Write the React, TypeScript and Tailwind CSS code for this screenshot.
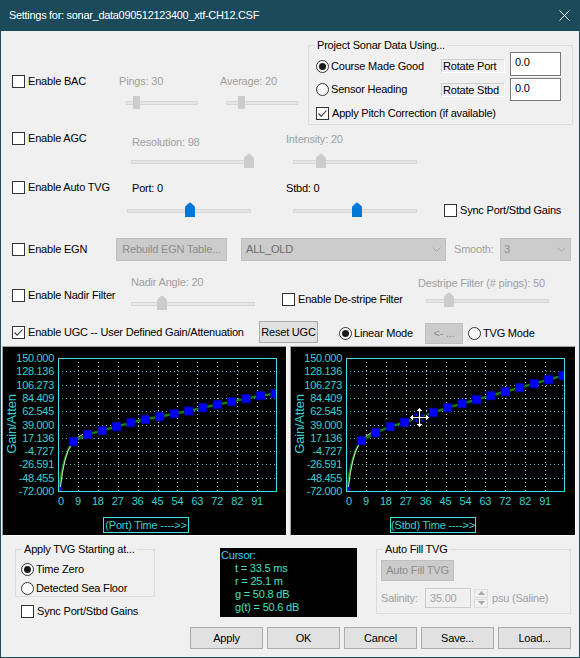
import React from "react";

const CYAN_TEXT = "#38d0d0";
const CYAN_LINE = "#40e0e0";

const Y_LABELS = ["150.000", "128.136", "106.273", "84.409", "62.545", "39.000", "17.136", "-4.727", "-26.591", "-48.455", "-72.000"];
const X_LABELS = ["0", "9", "18", "27", "36", "45", "54", "63", "72", "82", "91"];
const PORT = [94.7, 87.3, 83.7, 79.7, 75.7, 72.3, 69.7, 66.7, 64, 60.7, 57.7, 54.7, 51.7, 48.7, 46.7];
const STBD = [93.7, 85.7, 79.7, 75.3, 70.7, 65.7, 60.7, 56.7, 52.7, 48.7, 44.7, 40.7, 36.7, 32.7, 28.7];

function Check({ label, checked = false }: { label: string; checked?: boolean }) {
  return (
    <div className="flex items-center gap-[3px] whitespace-nowrap">
      <span className="w-[13px] h-[13px] shrink-0 border border-[#333333] bg-white flex items-center justify-center">
        {checked && (
          <svg width="11" height="11" viewBox="0 0 11 11">
            <path d="M1.5 5.5 4.2 8.2 9.5 2.5" fill="none" stroke="#333333" strokeWidth="1.1" />
          </svg>
        )}
      </span>
      <span>{label}</span>
    </div>
  );
}

function Radio({ label, checked = false }: { label: string; checked?: boolean }) {
  return (
    <div className="flex items-center gap-[2px] whitespace-nowrap">
      <span className="w-[13px] h-[13px] shrink-0 rounded-full border border-[#333333] bg-white flex items-center justify-center">
        {checked && <span className="w-[7px] h-[7px] rounded-full bg-[#1a1a1a]" />}
      </span>
      <span>{label}</span>
    </div>
  );
}

function Slider({ className, at, active = false, flat = false }: { className: string; at: number; active?: boolean; flat?: boolean }) {
  return (
    <div className={`relative shrink-0 ${flat ? "h-[13px]" : "h-[15px]"} ${className}`}>
      <div className={`absolute left-0 right-0 h-[4px] bg-[#e7e7e7] border border-[#d6d6d6] ${flat ? "top-[5px]" : "top-[7px]"}`} />
      {flat ? (
        <div className="absolute top-0 w-[7px] h-[13px] bg-[#cccccc]" style={{ left: at }} />
      ) : (
        <svg className="absolute top-0" style={{ left: at }} width="10" height="15" viewBox="0 0 10 15">
          <path d="M0 15V5.5Q0 4.5 1 3.8L4 1Q5 0 6 1L9 3.8Q10 4.5 10 5.5V15Z" fill={active ? "#0078d7" : "#cccccc"} />
        </svg>
      )}
    </div>
  );
}

function Chevron() {
  return (
    <svg width="9" height="5" viewBox="0 0 9 5">
      <path d="M0.5 0.5 4.5 4.5 8.5 0.5" fill="none" stroke="#a8a8a8" strokeWidth="1" />
    </svg>
  );
}

function Chart({ id, title, ys, width, cursor = false }: { id: string; title: string; ys: number[]; width: number; cursor?: boolean }) {
  const L = 55, R = 274, T = 11, B = 144;
  const dy = (B - T) / 10;
  const dx = (R - L) / 11;
  const pts = ys.map((y, i) => [70.3 + 14.4 * i, y] as const);
  const line = pts.map(([x, y]) => `${x},${y}`).join(" ");
  return (
    <svg width={width} height="188" className="block" fontFamily="'Liberation Sans', Arial, sans-serif">
      <defs>
        <clipPath id={id}>
          <rect x={L} y={T} width={R - L} height={B - T} />
        </clipPath>
      </defs>
      {Y_LABELS.map((t, k) => (
        <text key={t} x={51} y={T + k * dy + 4} textAnchor="end" fontSize="11" letterSpacing="-0.3" fill={CYAN_TEXT}>
          {t}
        </text>
      ))}
      {X_LABELS.map((t, k) => (
        <text key={t} x={k === 0 ? L + 3 : L + k * dx} y={158} textAnchor="middle" fontSize="11" fill={CYAN_TEXT}>
          {t}
        </text>
      ))}
      <text transform="translate(13,77) rotate(-90)" textAnchor="middle" fontSize="13" fill={CYAN_TEXT}>
        Gain/Atten
      </text>
      {Array.from({ length: 9 }, (_, k) => {
        const y = Math.round(T + (k + 1) * dy) + 0.5;
        return <line key={k} x1={L} x2={R} y1={y} y2={y} stroke="#30c8c8" strokeDasharray="1 3" />;
      })}
      {Array.from({ length: 10 }, (_, k) => {
        const x = Math.round(L + (k + 1) * dx) + 0.5;
        return <line key={k} x1={x} x2={x} y1={T} y2={B} stroke="#e0e0e0" strokeDasharray="1 3" />;
      })}
      <g clipPath={`url(#${id})`}>
        <path d={`M56 143 Q61 104 ${pts[0][0]} ${pts[0][1]}`} fill="none" stroke="#128012" strokeWidth="2.2" />
        <polyline points={line} fill="none" stroke="#128012" strokeWidth="2.4" />
        <path d={`M57.5 140 Q61 108 ${pts[0][0] - 2} ${pts[0][1] + 3}`} fill="none" stroke="#ffffff" strokeWidth="0.8" />
        <line x1={pts[0][0] + 4} y1={pts[0][1] - 4} x2={pts[1][0] - 3} y2={pts[1][1] - 1} stroke="#ffffff" strokeWidth="0.8" />
        <rect x={53} y={140} width={6} height={6} fill="#0000ff" />
        {pts.map(([x, y], i) => (
          <rect key={i} x={x - 4} y={y - 4} width={8} height={8} fill="#0000ff" stroke="#0000b0" strokeWidth="1" />
        ))}
      </g>
      <rect x={L + 0.5} y={T + 0.5} width={R - L - 1} height={B - T} fill="none" stroke={CYAN_LINE} />
      <rect x={id === "p" ? 100.5 : 99.5} y={170.5} width={85} height={15} fill="none" stroke={CYAN_LINE} />
      <text x={id === "p" ? 143 : 142} y={181.5} textAnchor="middle" fontSize="11" letterSpacing="-0.2" fill={CYAN_TEXT}>
        {title}
      </text>
      {cursor && (
        <g transform="translate(128.5,70.5)">
          <path
            d="M0 -10 4 -6 1 -6 1 -1 6 -1 6 -4 10 0 6 4 6 1 1 1 1 6 4 6 0 10 -4 6 -1 6 -1 1 -6 1 -6 4 -10 0 -6 -4 -6 -1 -1 -1 -1 -6 -4 -6Z"
            fill="#ffffff"
            stroke="#000000"
            strokeWidth="1"
          />
        </g>
      )}
    </svg>
  );
}

export default function App() {
  const gray = "text-[#a0a0a0]";
  return (
    <div className="w-[580px] h-[658px] bg-[#1b4b5a] flex flex-col font-['Liberation_Sans',Arial,sans-serif] text-[11px] leading-[13px] tracking-[-0.2px] text-black">
      {/* title bar */}
      <div className="h-[31px] shrink-0 flex items-center justify-between pl-[9px] pr-[10px] text-white tracking-[-0.3px]">
        <span>Settings for: sonar_data090512123400_xtf-CH12.CSF</span>
        <svg width="11" height="11" viewBox="0 0 11 11">
          <path d="M0.5 0.5 10.5 10.5 M10.5 0.5 0.5 10.5" stroke="#ffffff" strokeWidth="1" />
        </svg>
      </div>

      <div className="flex-1 mx-[1px] mb-[1px] bg-[#f0f0f0] flex flex-col">
        {/* BAC + projection group */}
        <div className="h-[96px] flex items-start">
          <div className="w-[307px] pt-[44px] flex items-start">
            <div className="w-[118px] pl-[11px]">
              <Check label="Enable BAC" />
            </div>
            <div className="w-[101px] flex flex-col">
              <span className={gray}>Pings: 30</span>
              <Slider className="mt-[8px] ml-[7px] w-[72px]" at={7} flat />
            </div>
            <div className="flex flex-col">
              <span className={gray}>Average: 20</span>
              <Slider className="mt-[8px] ml-[6px] w-[72px]" at={12} flat />
            </div>
          </div>
          <fieldset className="mt-[7px] w-[265px] h-[87px] border border-[#dcdcdc]">
            <legend className="ml-[6px] px-[2px] leading-[14px]">Project Sonar Data Using...</legend>
            <div className="h-[25px] flex items-start">
              <div className="w-[132px] pl-[7px] mt-[8px]">
                <Radio label="Course Made Good" checked />
              </div>
              <div className="mt-[7px] w-[64px] h-[14px] pl-[1px] leading-[13px] border border-t-[#cfcfcf] border-l-[#cfcfcf] border-r-white border-b-white">
                Rotate Port
              </div>
              <div className="ml-[5px] w-[51px] h-[24px] border border-[#7a7a7a] bg-white pl-[4px] pt-[3px]">0.0</div>
            </div>
            <div className="h-[24px] flex items-start">
              <div className="w-[132px] pl-[7px] mt-[6px]">
                <Radio label="Sensor Heading" />
              </div>
              <div className="mt-[6px] w-[64px] h-[14px] pl-[1px] leading-[13px] border border-t-[#cfcfcf] border-l-[#cfcfcf] border-r-white border-b-white">
                Rotate Stbd
              </div>
              <div className="ml-[5px] mt-[1px] w-[51px] h-[23px] border border-[#7a7a7a] bg-white pl-[4px] pt-[3px]">0.0</div>
            </div>
            <div className="pl-[7px] mt-[6px]">
              <Check label="Apply Pitch Correction (if available)" checked />
            </div>
          </fieldset>
        </div>

        {/* AGC */}
        <div className="h-[48px] flex items-start">
          <div className="w-[130px] pl-[11px] pt-[5px]">
            <Check label="Enable AGC" />
          </div>
          <div className="w-[155px] flex flex-col">
            <span className={`ml-[1px] mt-[9px] ${gray}`}>Resolution: 98</span>
            <Slider className="mt-[4px] w-[123px]" at={113} />
          </div>
          <div className="flex flex-col">
            <span className={`mt-[6px] ${gray}`}>Intensity: 20</span>
            <Slider className="mt-[7px] ml-[7px] w-[124px]" at={23} />
          </div>
        </div>

        {/* Auto TVG */}
        <div className="h-[55px] flex items-start">
          <div className="w-[126px] pl-[11px] pt-[6px]">
            <Check label="Enable Auto TVG" />
          </div>
          <div className="w-[159px] flex flex-col">
            <span className="ml-[5px] mt-[7px]">Port: 0</span>
            <Slider className="mt-[7px] w-[124px]" at={58} active />
          </div>
          <div className="w-[158px] flex flex-col">
            <span className="mt-[7px]">Stbd: 0</span>
            <Slider className="mt-[7px] ml-[7px] w-[124px]" at={59} active />
          </div>
          <div className="pt-[29px]">
            <Check label="Sync Port/Stbd Gains" />
          </div>
        </div>

        {/* EGN */}
        <div className="h-[38px] flex items-start">
          <div className="w-[115px] pl-[11px] pt-[13px]">
            <Check label="Enable EGN" />
          </div>
          <div className="mt-[8px] w-[111px] h-[23px] bg-[#cccccc] border border-[#bfbfbf] text-[#8c8c8c] flex items-center justify-center whitespace-nowrap">
            Rebuild EGN Table...
          </div>
          <div className="ml-[14px] mt-[8px] w-[205px] h-[23px] bg-[#cccccc] border border-[#bfbfbf] text-[#6d6d6d] flex items-center justify-between pl-[4px] pr-[4px]">
            <span>ALL_OLD</span>
            <Chevron />
          </div>
          <span className={`ml-[8px] mt-[8px] w-[46px] leading-[23px] ${gray}`}>Smooth:</span>
          <div className="mt-[8px] w-[71px] h-[23px] bg-[#cccccc] border border-[#bfbfbf] text-[#8c8c8c] flex items-center justify-between pl-[3px] pr-[4px]">
            <span>3</span>
            <Chevron />
          </div>
        </div>

        {/* Nadir / destripe */}
        <div className="h-[47px] flex items-start">
          <div className="w-[130px] pl-[11px] pt-[21px]">
            <Check label="Enable Nadir Filter" />
          </div>
          <div className="w-[151px] flex flex-col">
            <span className={`mt-[8px] ${gray}`}>Nadir Angle: 20</span>
            <Slider className="mt-[6px] w-[124px]" at={26} />
          </div>
          <div className="w-[136px] pt-[25px]">
            <Check label="Enable De-stripe Filter" />
          </div>
          <div className="flex flex-col">
            <span className={`mt-[9px] whitespace-nowrap ${gray}`}>Destripe Filter (# pings): 50</span>
            <Slider className="mt-[2px] ml-[8px] w-[123px]" at={18} />
          </div>
        </div>

        {/* UGC */}
        <div className="h-[31px] flex items-start">
          <div className="w-[258px] pl-[11px] pt-[11px]">
            <Check label="Enable UGC -- User Defined Gain/Attenuation" checked />
          </div>
          <div className="mt-[6px] w-[59px] h-[22px] bg-[#e1e1e1] border border-[#adadad] flex items-center justify-center whitespace-nowrap">
            Reset UGC
          </div>
          <div className="ml-[21px] mt-[12px] w-[86px]">
            <Radio label="Linear Mode" checked />
          </div>
          <div className="mt-[8px] w-[38px] h-[21px] bg-[#cccccc] border border-[#bfbfbf] text-[#8c8c8c] flex items-center justify-center">
            &lt;- ...
          </div>
          <div className="ml-[5px] mt-[12px]">
            <Radio label="TVG Mode" />
          </div>
        </div>

        {/* charts */}
        <div className="h-[191px] flex items-start pl-[1px] gap-[3px]">
          <div className="w-[285px] h-[190px] bg-black border border-t-[#a0a0a0] border-l-[#a0a0a0] border-r-white border-b-white">
            <Chart id="p" title="(Port) Time ---->>" ys={PORT} width={283} />
          </div>
          <div className="w-[286px] h-[190px] bg-black border border-t-[#a0a0a0] border-l-[#a0a0a0] border-r-white border-b-white">
            <Chart id="s" title="(Stbd) Time ---->>" ys={STBD} width={284} cursor />
          </div>
        </div>

        {/* bottom */}
        <div className="flex-1 flex flex-col pt-[5px]">
          <div className="h-[76px] flex items-start">
            <div className="ml-[14px] w-[140px] flex flex-col">
              <fieldset className="w-[140px] h-[55px] border border-[#dcdcdc]">
                <legend className="ml-[6px] px-[2px] leading-[14px]">Apply TVG Starting at...</legend>
                <div className="pl-[5px] mt-[7px]">
                  <Radio label="Time Zero" checked />
                </div>
                <div className="pl-[5px] mt-[6px]">
                  <Radio label="Detected Sea Floor" />
                </div>
              </fieldset>
              <div className="ml-[6px] mt-[8px]">
                <Check label="Sync Port/Stbd Gains" />
              </div>
            </div>
            <div className="ml-[65px] mt-[6px] w-[137px] h-[69px] bg-black pt-[1px] pl-[1px] text-[#40e0c0] leading-[13px]">
              <div className="text-[#40c8ff]">Cursor:</div>
              <div className="pl-[14px]">t = 33.5 ms</div>
              <div className="pl-[14px]">r = 25.1 m</div>
              <div className="pl-[14px]">g = 50.8 dB</div>
              <div className="pl-[14px]">g(t) = 50.6 dB</div>
            </div>
            <fieldset className="ml-[19px] w-[195px] h-[72px] border border-[#dcdcdc]">
              <legend className="ml-[6px] px-[2px] leading-[14px]">Auto Fill TVG</legend>
              <div className="ml-[4px] mt-[4px] w-[73px] h-[21px] bg-[#cccccc] border border-[#bfbfbf] text-[#8c8c8c] flex items-center justify-center whitespace-nowrap">
                Auto Fill TVG
              </div>
              <div className="mt-[7px] ml-[4px] flex items-center">
                <span className={`w-[44px] ${gray}`}>Salinity:</span>
                <div className={`w-[46px] h-[20px] border border-[#cccccc] bg-[#f0f0f0] pl-[4px] flex items-center ${gray}`}>35.00</div>
                <div className="ml-[3px] w-[14px] h-[19px] flex flex-col gap-[1px]">
                  <div className="flex-1 border border-[#dcdcdc] flex items-center justify-center">
                    <svg width="7" height="4" viewBox="0 0 7 4">
                      <path d="M0 4 3.5 0 7 4Z" fill="#a8a8a8" />
                    </svg>
                  </div>
                  <div className="flex-1 border border-[#dcdcdc] flex items-center justify-center">
                    <svg width="7" height="4" viewBox="0 0 7 4">
                      <path d="M0 0 3.5 4 7 0Z" fill="#a8a8a8" />
                    </svg>
                  </div>
                </div>
                <span className={`ml-[4px] whitespace-nowrap ${gray}`}>psu (Saline)</span>
              </div>
            </fieldset>
          </div>
          <div className="mt-[9px] flex justify-end pr-[8px] gap-[4px]">
            {["Apply", "OK", "Cancel", "Save...", "Load..."].map((b) => (
              <div key={b} className="w-[73px] h-[22px] bg-[#e1e1e1] border border-[#adadad] flex items-center justify-center">
                {b}
              </div>
            ))}
          </div>
        </div>
      </div>
    </div>
  );
}
